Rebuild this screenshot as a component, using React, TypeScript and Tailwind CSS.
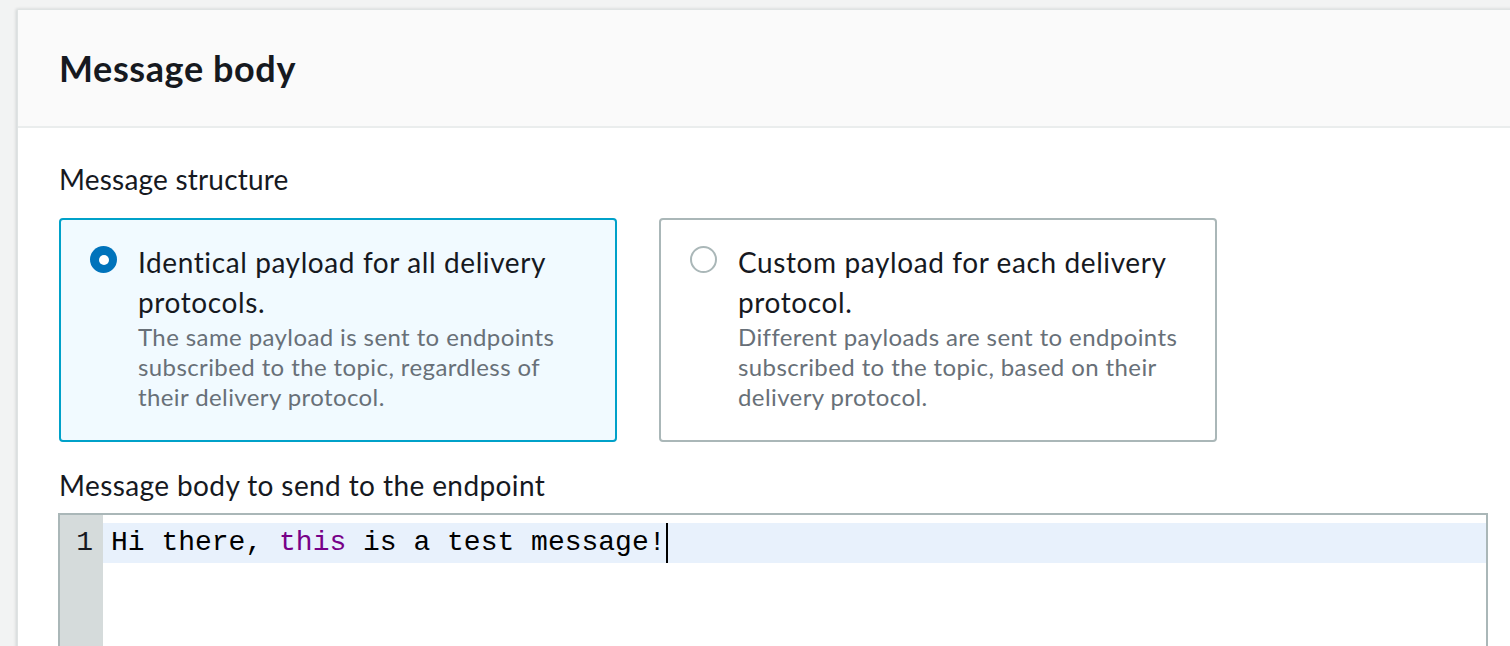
import React from 'react';

const sans = { fontFamily: 'Lato, "Liberation Sans", Arial, sans-serif' };
const mono = { fontFamily: '"Liberation Mono", "Courier New", monospace' };

type OptionProps = {
  checked: boolean;
  title: string;
  description: string;
};

const RadioCard = ({ checked, title, description }: OptionProps) => (
  <div
    className={
      checked
        ? 'flex rounded-[4px] border-2 border-[#00a1c9] bg-[#f1faff] pt-[22px] pb-[28px] pl-[29px] pr-[30px]'
        : 'flex rounded-[4px] border-2 border-[#aab7b8] bg-white pt-[22px] pb-[28px] pl-[29px] pr-[30px]'
    }
  >
    <div className="mt-[4px] shrink-0">
      {checked ? (
        <div className="flex h-[27px] w-[27px] items-center justify-center rounded-full bg-[#0073bb]">
          <div className="h-[10px] w-[10px] rounded-full bg-white" />
        </div>
      ) : (
        <div className="h-[27px] w-[27px] rounded-full border-2 border-[#aab7b8] bg-white" />
      )}
    </div>
    <div className="ml-[21px]">
      <p className="text-[28px] leading-[40px] tracking-[0.6px] text-[#16191f]">{title}</p>
      <p className="text-[24px] leading-[30px] tracking-[0.4px] text-[#687078]">{description}</p>
    </div>
  </div>
);

export default function App() {
  return (
    <div className="h-[646px] overflow-hidden bg-[#f2f3f3] pl-[17px] pt-[9px]" style={sans}>
      <div className="w-[1510px] border-l border-t border-[#dfe3e3] bg-white shadow-[-1px_0_3px_rgba(0,28,36,0.15)]">
        {/* header */}
        <div className="flex h-[118px] items-center border-b-2 border-[#eaeded] bg-[#fafafa] px-[41px]">
          <h2 className="text-[36px] font-bold leading-[44px] tracking-[0.6px] text-[#16191f]">Message body</h2>
        </div>

        <div className="px-[41px] pt-[31px]">
          <p className="text-[28px] leading-[40px] tracking-[0.2px] text-[#16191f]">Message structure</p>

          <div className="mt-[19px] grid w-[1158px] grid-cols-2 gap-[42px]">
            <RadioCard
              checked
              title="Identical payload for all delivery protocols."
              description="The same payload is sent to endpoints subscribed to the topic, regardless of their delivery protocol."
            />
            <RadioCard
              checked={false}
              title="Custom payload for each delivery protocol."
              description="Different payloads are sent to endpoints subscribed to the topic, based on their delivery protocol."
            />
          </div>

          <p className="mt-[23px] text-[28px] leading-[40px] tracking-[0.4px] text-[#16191f]">
            Message body to send to the endpoint
          </p>

          {/* code editor */}
          <div className="mt-[8px] ml-[-1px] flex h-[200px] w-[1430px] border-2 border-[#aab7b8] bg-white" style={mono}>
            <div className="w-[43px] shrink-0 bg-[#d5dbdb] pt-[8px]">
              <div className="h-[40px] pr-[10px] text-right text-[28px] leading-[40px] text-[#16191f]">1</div>
            </div>
            <div className="flex-1 pt-[8px]">
              <div className="flex h-[40px] items-center bg-[#e8f1fc] pl-[8px] text-[28px] leading-[40px] text-[#000]">
                <span className="whitespace-pre">
                  Hi there, <span className="text-[#770088]">this</span> is a test message!
                </span>
                <span className="h-[40px] w-[2px] bg-black" />
              </div>
            </div>
          </div>
        </div>
      </div>
    </div>
  );
}
